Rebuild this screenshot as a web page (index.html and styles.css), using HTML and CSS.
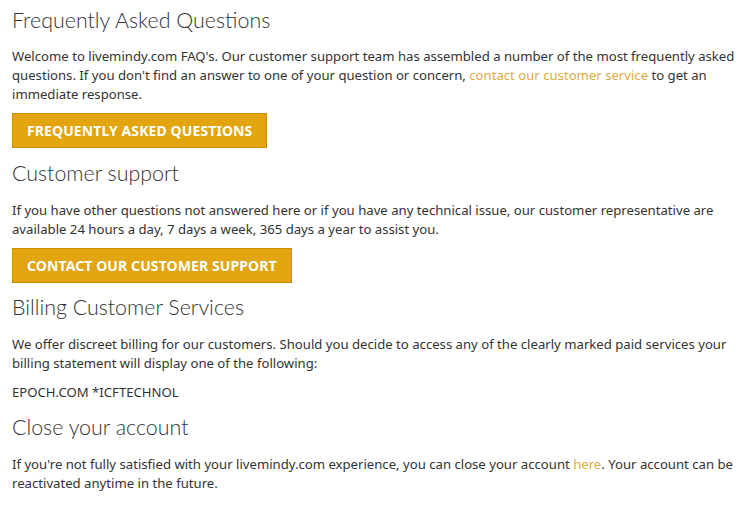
FILE: index.html
```html
<!DOCTYPE html>
<html>
<head>
<meta charset="utf-8">
<link rel="stylesheet" href="styles.css">
</head>
<body>
<div class="page">
  <h2 class="title">Frequently Asked Questions</h2>
  <p class="text text-first">Welcome to livemindy.com FAQ's. Our customer support team has assembled a number of the most frequently asked questions. If you don't find an answer to one of your question or concern, <a class="link" href="#">contact our customer service</a> to get an immediate response.</p>
  <a class="btn" href="#">FREQUENTLY ASKED QUESTIONS</a>

  <h2 class="title">Customer support</h2>
  <p class="text">If you have other questions not answered here or if you have any technical issue, our customer representative are available 24 hours a day, 7 days a week, 365 days a year to assist you.</p>
  <a class="btn btn-last" href="#">CONTACT OUR CUSTOMER SUPPORT</a>

  <h2 class="title">Billing Customer Services</h2>
  <p class="text">We offer discreet billing for our customers. Should you decide to access any of the clearly marked paid services your billing statement will display one of the following:</p>
  <p class="text code">EPOCH.COM *ICFTECHNOL</p>

  <h2 class="title title-tight">Close your account</h2>
  <p class="text">If you're not fully satisfied with your livemindy.com experience, you can close your account <a class="link" href="#">here</a>. Your account can be reactivated anytime in the future.</p>
</div>
</body>
</html>
```
FILE: styles.css
```css
html, body {
  margin: 0;
  padding: 0;
  background: #ffffff;
}
.page {
  padding: 7px 12px 0 12px;
  display: flex;
  flex-direction: column;
  align-items: flex-start;
  font-family: "Noto Sans", "Open Sans", sans-serif;
  color: #333333;
}
.title {
  margin: 0;
  font-family: "Lato", "Open Sans", sans-serif;
  font-weight: 300;
  font-size: 21.4px;
  line-height: 26px;
  color: #333333;
}
.text {
  margin: 15px 0 0 0;
  font-size: 13.15px;
  line-height: 19px;
}
.text-first {
  margin-top: 14px;
}
.text + .text {
  margin-top: 10px;
}
.text + .title {
  margin-top: 14px;
}
.text + .title-tight {
  margin-top: 12px;
}
.link {
  color: #e0ac45;
  text-decoration: none;
}
.btn {
  display: inline-block;
  margin-top: 9px;
  margin-bottom: 12px;
  padding: 0 14px;
  height: 35px;
  line-height: 33px;
  box-sizing: border-box;
  background: #e2a50f;
  border: 1px solid #c98f00;
  color: #ffffff;
  font-weight: 700;
  font-size: 14px;
  letter-spacing: 0.1px;
  text-decoration: none;
}
.btn-last {
  margin-bottom: 11px;
}
```
